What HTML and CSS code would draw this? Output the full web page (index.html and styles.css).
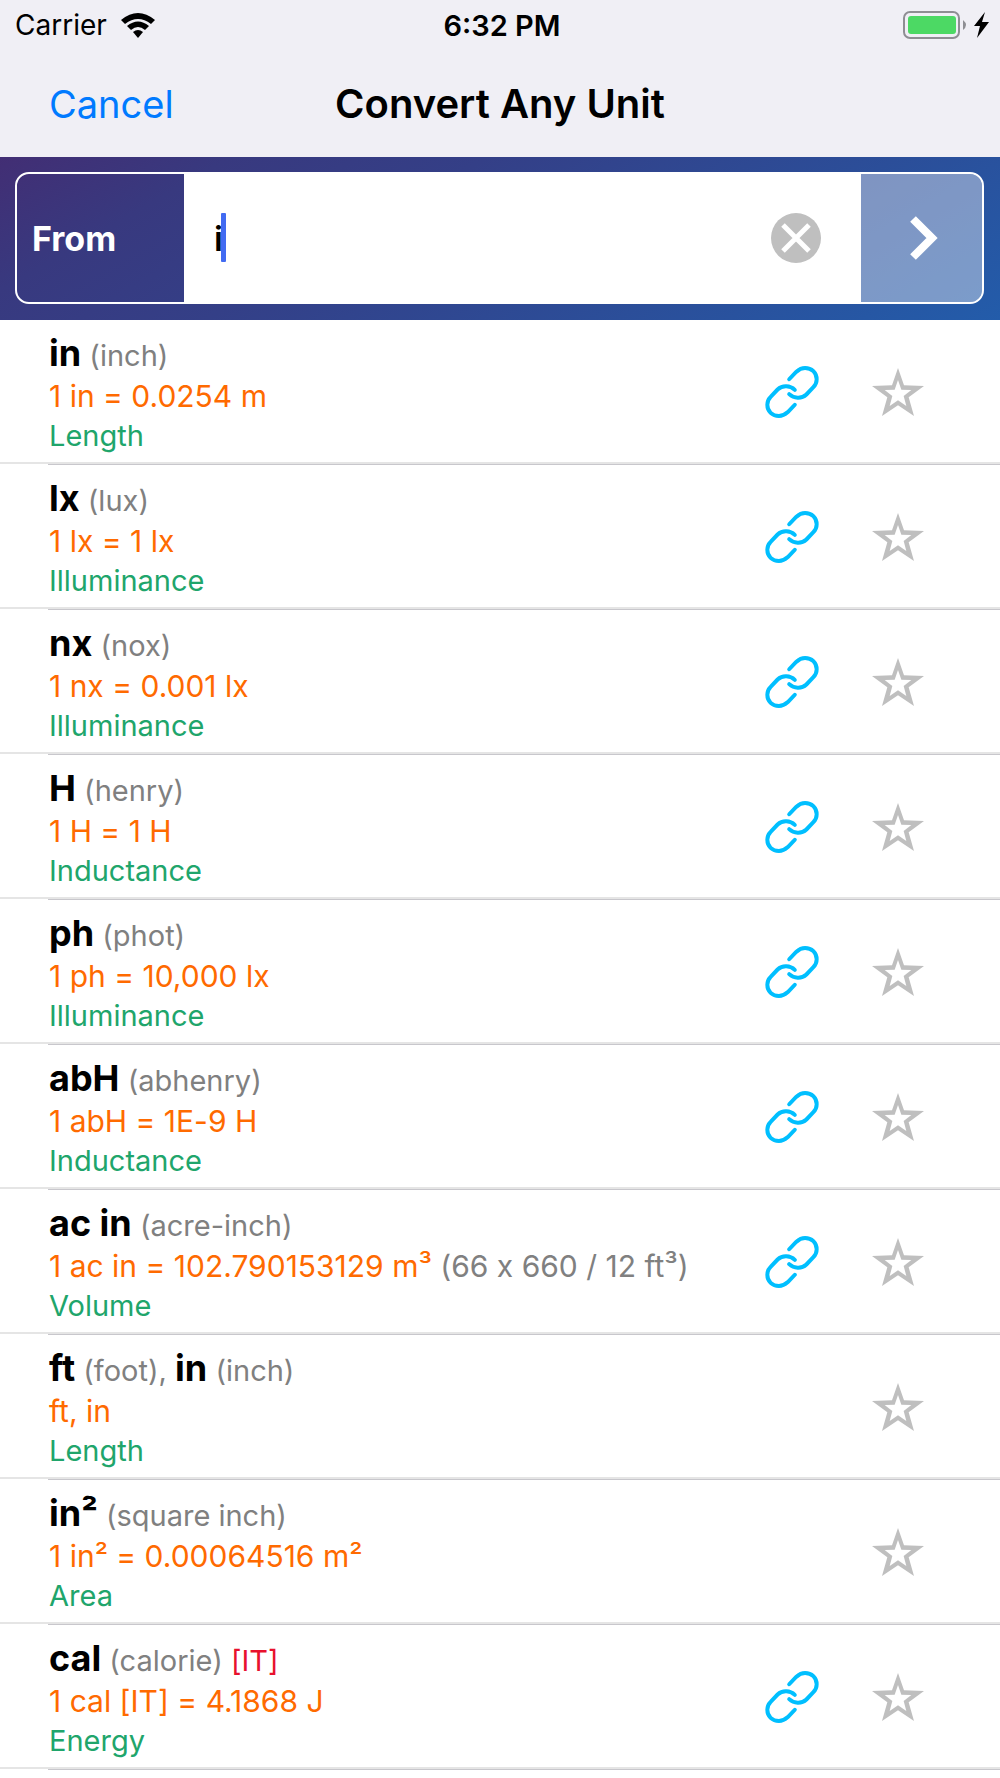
FILE: index.html
```html
<!DOCTYPE html>
<html lang="en">
<head>
  <meta charset="utf-8">
  <meta name="viewport" content="width=device-width, initial-scale=1.0">
  <title>Convert Any Unit</title>
  <link rel="stylesheet" href="styles.css">
</head>
<body>

<svg class="sprite" aria-hidden="true">
  <symbol id="icon-link" viewBox="0 0 161 157">
    <path d="M72 40L93 18C103 9 111 6 120 6C140 6 155 20 155 40C155 50 151 58 145 64L124 86C109 100 86 98 72 85M89 117L68 139C58 148 50 151 41 151C21 151 6 137 6 117C6 107 10 99 16 93L37 71C52 57 75 59 89 72" fill="none" stroke="currentColor" stroke-width="12" stroke-linecap="round"/>
  </symbol>
  <symbol id="icon-star" viewBox="0 0 156 144">
    <path fill="currentColor" fill-rule="evenodd" d="M78 0L96 52L156 54L110 88L126 144L78 112L30 144L46 88L0 54L60 52ZM78 36L68 65L38 66L61 84L53 114L78 97L103 114L95 84L118 66L88 65Z"/>
  </symbol>
</svg>

<header>
  <div class="status-bar">
    <div class="carrier">
      <span>Carrier</span>
      <svg width="34" height="25" viewBox="0 0 34 25">
        <path d="M0 7Q17 -7 34 7L30 11Q17 1 4 11Z"/>
        <path d="M6 13Q17 4 28 13L24 17Q17 11 10 17Z"/>
        <path d="M12 19Q17 15 22 19L17 25Z"/>
      </svg>
    </div>
    <div class="time">6:32 PM</div>
    <div class="battery">
      <svg width="64" height="28" viewBox="0 0 64 28">
        <rect x="1" y="1" width="55" height="26" rx="6" fill="none" stroke="#8e8e93" stroke-width="2"/>
        <rect x="5" y="5" width="48" height="18" rx="3" fill="#4cd964"/>
        <path d="M60 9Q66 14 60 19Z" fill="#8e8e93"/>
      </svg>
      <svg width="15" height="26" viewBox="0 0 15 26">
        <path d="M11 0L0 14H6L3 26L15 10H8Z"/>
      </svg>
    </div>
  </div>
  <div class="nav-bar">
    <button type="button" class="cancel">Cancel</button>
    <h1>Convert Any Unit</h1>
  </div>
</header>

<form class="search">
  <div class="search-box">
    <label for="from">From</label>
    <div class="field">
      <input type="text" id="from" value="i" autocomplete="off">
      <span class="caret"></span>
      <button type="button" class="clear" aria-label="Clear">
        <svg width="50" height="50" viewBox="0 0 50 50">
          <circle cx="25" cy="25" r="25" fill="#bfbfbf"/>
          <path d="M12 12L38 38M38 12L12 38" stroke="#fff" stroke-width="5"/>
        </svg>
      </button>
    </div>
    <button type="button" class="next" aria-label="Next">
      <svg width="28" height="44" viewBox="0 0 28 44">
        <path d="M3 3L22 22L3 41" fill="none" stroke="#fff" stroke-width="8"/>
      </svg>
    </button>
  </div>
</form>

<ul class="units">
  <li>
    <div class="unit">
      <div class="name"><b>in</b> (inch)</div>
      <div class="value">1 in = 0.0254 m</div>
      <div class="kind">Length</div>
    </div>
    <a href="#" aria-label="Link"><svg><use href="#icon-link"/></svg></a>
    <button type="button" aria-label="Favorite"><svg><use href="#icon-star"/></svg></button>
  </li>
  <li>
    <div class="unit">
      <div class="name"><b>lx</b> (lux)</div>
      <div class="value">1 lx = 1 lx</div>
      <div class="kind">Illuminance</div>
    </div>
    <a href="#" aria-label="Link"><svg><use href="#icon-link"/></svg></a>
    <button type="button" aria-label="Favorite"><svg><use href="#icon-star"/></svg></button>
  </li>
  <li>
    <div class="unit">
      <div class="name"><b>nx</b> (nox)</div>
      <div class="value">1 nx = 0.001 lx</div>
      <div class="kind">Illuminance</div>
    </div>
    <a href="#" aria-label="Link"><svg><use href="#icon-link"/></svg></a>
    <button type="button" aria-label="Favorite"><svg><use href="#icon-star"/></svg></button>
  </li>
  <li>
    <div class="unit">
      <div class="name"><b>H</b> (henry)</div>
      <div class="value">1 H = 1 H</div>
      <div class="kind">Inductance</div>
    </div>
    <a href="#" aria-label="Link"><svg><use href="#icon-link"/></svg></a>
    <button type="button" aria-label="Favorite"><svg><use href="#icon-star"/></svg></button>
  </li>
  <li>
    <div class="unit">
      <div class="name"><b>ph</b> (phot)</div>
      <div class="value">1 ph = 10,000 lx</div>
      <div class="kind">Illuminance</div>
    </div>
    <a href="#" aria-label="Link"><svg><use href="#icon-link"/></svg></a>
    <button type="button" aria-label="Favorite"><svg><use href="#icon-star"/></svg></button>
  </li>
  <li>
    <div class="unit">
      <div class="name"><b>abH</b> (abhenry)</div>
      <div class="value">1 abH = 1E-9 H</div>
      <div class="kind">Inductance</div>
    </div>
    <a href="#" aria-label="Link"><svg><use href="#icon-link"/></svg></a>
    <button type="button" aria-label="Favorite"><svg><use href="#icon-star"/></svg></button>
  </li>
  <li>
    <div class="unit">
      <div class="name"><b>ac in</b> (acre-inch)</div>
      <div class="value">1 ac in = 102.790153129 m³ <span class="note">(66 x 660 / 12 ft³)</span></div>
      <div class="kind">Volume</div>
    </div>
    <a href="#" aria-label="Link"><svg><use href="#icon-link"/></svg></a>
    <button type="button" aria-label="Favorite"><svg><use href="#icon-star"/></svg></button>
  </li>
  <li>
    <div class="unit">
      <div class="name"><b>ft</b> (foot), <b>in</b> (inch)</div>
      <div class="value">ft, in</div>
      <div class="kind">Length</div>
    </div>
    <button type="button" aria-label="Favorite"><svg><use href="#icon-star"/></svg></button>
  </li>
  <li>
    <div class="unit">
      <div class="name"><b>in²</b> (square inch)</div>
      <div class="value">1 in² = 0.00064516 m²</div>
      <div class="kind">Area</div>
    </div>
    <button type="button" aria-label="Favorite"><svg><use href="#icon-star"/></svg></button>
  </li>
  <li>
    <div class="unit">
      <div class="name"><b>cal</b> (calorie) <span class="tag">[IT]</span></div>
      <div class="value">1 cal [IT] = 4.1868 J</div>
      <div class="kind">Energy</div>
    </div>
    <a href="#" aria-label="Link"><svg><use href="#icon-link"/></svg></a>
    <button type="button" aria-label="Favorite"><svg><use href="#icon-star"/></svg></button>
  </li>
</ul>

</body>
</html>
```
FILE: styles.css
```css
* {
  box-sizing: border-box;
}

body {
  margin: 0;
  font-family: Inter, "Liberation Sans", sans-serif;
  background: #fff;
  color: #000;
}

button {
  padding: 0;
  border: none;
  background: none;
  font: inherit;
  cursor: pointer;
}

svg {
  display: block;
}

.sprite {
  position: absolute;
  width: 0;
  height: 0;
}

header {
  background: #f0eff5;
}

.status-bar {
  display: grid;
  grid-template-columns: 1fr auto 1fr;
  align-items: center;
  height: 50px;
  padding: 0 11px 0 15px;
  font-size: 28px;
}

.carrier, .battery {
  display: flex;
  align-items: center;
  gap: 14px;
}

.battery {
  justify-content: flex-end;
  gap: 7px;
}

.time {
  font-size: 29px;
  font-weight: 600;
}

.nav-bar {
  display: grid;
  grid-template-columns: 1fr auto 1fr;
  align-items: center;
  height: 107px;
  padding: 0 49px;
  font-size: 38px;
}

.cancel {
  justify-self: start;
  color: #007aff;
}

h1 {
  margin: 0;
  font-size: 40px;
  font-weight: 600;
}

.search {
  padding: 15px 16px 16px 15px;
  background: linear-gradient(150deg, #422e74, #38397f 18%, #343f87 38%, #235caa);
}

.search-box {
  display: flex;
  height: 132px;
  border: 2px solid #fff;
  border-radius: 14px;
  overflow: hidden;
}

label {
  display: flex;
  align-items: center;
  width: 167px;
  padding-left: 15px;
  color: #fff;
  font-size: 34px;
  font-weight: 700;
}

.field {
  position: relative;
  flex: 1;
  display: flex;
  align-items: center;
  background: #fff;
}

input {
  flex: 1;
  min-width: 0;
  height: 100%;
  padding: 0 0 0 30px;
  border: none;
  outline: none;
  background: none;
  font: 600 34px Inter, "Liberation Sans", sans-serif;
  color: #000;
}

.caret {
  position: absolute;
  left: 37px;
  top: 39px;
  width: 5px;
  height: 49px;
  border-radius: 1px;
  background: #426bf2;
}

.clear {
  margin-right: 40px;
}

.next {
  display: flex;
  align-items: center;
  justify-content: center;
  width: 121px;
  padding-left: 4px;
  background: rgba(255, 255, 255, 0.4);
}

.units {
  margin: 0;
  padding: 0;
  list-style: none;
}

/* full-width rule with an inset, darker hairline under it */
.units li {
  display: flex;
  align-items: center;
  gap: 53px;
  padding: 9px 76px 10px 49px;
  background:
    linear-gradient(#c8c7cc, #c8c7cc) 48px 100% / 100% 1px no-repeat,
    linear-gradient(#e5e5e5, #e5e5e5) 0 calc(100% - 1px) / 100% 2px no-repeat;
}

.unit {
  flex: 1;
  padding-top: 5px;
  font-size: 29px;
  line-height: 39px;
  font-feature-settings: "calt" 0;
}

.name {
  line-height: 43px;
  color: #808080;
}

.name b {
  font-size: 36px;
  line-height: 1;
  font-weight: 700;
  color: #000;
}

.value {
  font-size: 30px;
  color: #ff6a00;
}

.kind {
  color: #20a56b;
}

.note {
  color: #808080;
}

.tag {
  color: #e8112d;
}

.units a {
  color: #00bfff;
}

.units a svg {
  width: 54px;
  height: 52px;
}

.units li button {
  color: #bfbfbf;
}

.units li button svg {
  width: 52px;
  height: 48px;
}
```
